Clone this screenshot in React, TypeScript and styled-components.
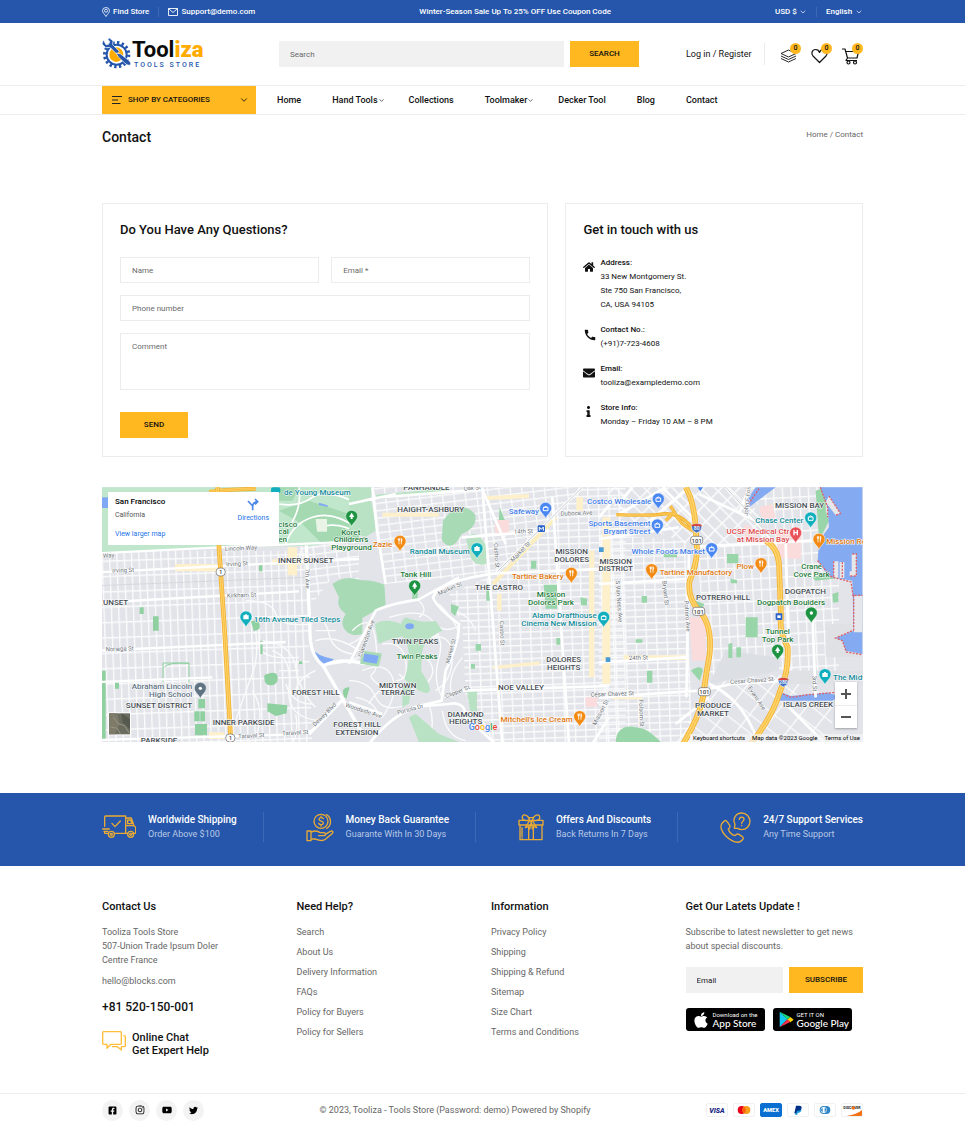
import React from 'react';
import styled, { createGlobalStyle, css } from 'styled-components';
import { FaApple, FaEnvelope, FaFacebookSquare, FaHome, FaInfo, FaInstagram, FaTwitter, FaYoutube } from 'react-icons/fa';
import { MdCall } from 'react-icons/md';
import { ChevronDown } from 'lucide-react';

const blue = '#2556ab';
const amber = '#ffb81f';
const line = '#ececec';
const grey = '#666';

const GlobalStyle = createGlobalStyle`
  *, *::before, *::after { box-sizing: border-box; }
  body { margin: 0; background: #fff; color: #111; font: 400 9px/14px Roboto, "Liberation Sans", sans-serif; }
  a { color: inherit; text-decoration: none; }
  h1, h2, h3, p, ul, dl, dd, address { margin: 0; padding: 0; font-style: normal; }
  ul { list-style: none; }
  button, input, textarea, select { font: inherit; color: inherit; border: 0; border-radius: 0; margin: 0; }
  button { cursor: pointer; }
  svg { display: block; flex: none; }
`;

const Container = styled.div`
  padding: 0 102px;
  @media (max-width: 820px) { padding: 0 20px; }
`;

/* ---------- Top bar ---------- */
const TopBar = styled.div`
  background: ${blue};
  color: #fff;
  font-size: 8px;
  font-weight: 500;
`;
const TopRow = styled(Container)`
  display: flex;
  flex-wrap: wrap;
  align-items: center;
  justify-content: space-between;
  min-height: 23px;
`;
const TopGroup = styled.div`
  display: flex;
  align-items: center;
`;
const TopLink = styled.a`
  display: flex;
  align-items: center;
  gap: 3px;
`;
const TopDivider = styled.span`
  width: 1px;
  height: 10px;
  margin: 0 9px;
  background: #3c68b5;
`;
const SelectWrap = styled.span`
  display: flex;
  align-items: center;
  gap: 2px;
`;
const Select = styled.select`
  appearance: none;
  background: transparent;
  padding: 0;
  option { color: #111; }
`;

/* ---------- Header ---------- */
const HeaderRow = styled(Container)`
  display: flex;
  flex-wrap: wrap;
  align-items: center;
  min-height: 62px;
`;
const LogoLink = styled.a`
  display: flex;
  align-items: center;
  width: 177px;
`;
const LogoText = styled.span`
  display: flex;
  flex-direction: column;
  align-items: flex-start;
`;
const LogoName = styled.span`
  font-size: 22px;
  line-height: 22px;
  font-weight: 700;
  color: #0b0b0b;
  b { color: #ffab00; }
`;
const LogoTag = styled.span`
  padding-left: 2px;
  font-size: 7px;
  line-height: 8px;
  font-weight: 500;
  letter-spacing: 2px;
  color: ${blue};
`;
const SearchForm = styled.form`
  display: flex;
  flex: 1;
  gap: 6px;
`;
const fieldText = css`
  font-size: 8px;
  &::placeholder { color: #6a6a6a; opacity: 1; }
`;
const SearchInput = styled.input`
  flex: 1;
  min-width: 0;
  height: 26px;
  padding: 0 11px;
  background: #f1f1f2;
  ${fieldText}
`;
const Button = styled.button<{ $width: number }>`
  width: ${(p) => p.$width}px;
  height: 26px;
  padding: 0;
  background: ${amber};
  font-size: 8px;
  font-weight: 500;
  color: #111;
`;
const HeaderTools = styled.div`
  display: flex;
  align-items: center;
  justify-content: space-between;
  width: 177px;
  margin-left: 47px;
  @media (max-width: 820px) { margin-left: 16px; }
`;
const Login = styled.a`
  padding: 4px 12px 4px 0;
  border-right: 1px solid ${line};
  white-space: nowrap;
`;
const ToolList = styled.div`
  display: flex;
  gap: 10px;
`;
const Tool = styled.a`
  position: relative;
  width: 21px;
  height: 22px;
  padding-top: 5px;
`;
const Badge = styled.span`
  position: absolute;
  top: 0;
  right: 0;
  width: 11px;
  height: 11px;
  border-radius: 50%;
  background: ${amber};
  text-align: center;
  line-height: 11px;
  font-size: 7px;
  font-weight: 500;
`;

/* ---------- Navigation ---------- */
const NavBar = styled.div`
  border-top: 1px solid ${line};
  border-bottom: 1px solid ${line};
`;
const NavRow = styled(Container)`
  display: flex;
  flex-wrap: wrap;
  align-items: center;
  gap: 21px;
  font-weight: 500;
`;
const CategoryButton = styled.button`
  display: flex;
  align-items: center;
  width: 154px;
  height: 28px;
  gap: 6px;
  padding: 0 7px 0 10px;
  background: ${amber};
  font-size: 8px;
  svg:last-child { margin-left: auto; }
`;
const NavLinks = styled.nav`
  display: flex;
  flex-wrap: wrap;
  gap: 31px;
`;
const NavLink = styled.a<{ $menu?: boolean }>`
  display: flex;
  align-items: center;
  margin-right: ${(p) => (p.$menu ? '-7px' : '0')};
`;

/* ---------- Contact page ---------- */
const TitleRow = styled(Container)`
  display: flex;
  justify-content: space-between;
  align-items: flex-start;
  padding-top: 13px;
  font-size: 8px;
  color: ${grey};
`;
const PageTitle = styled.h1`
  font-size: 14px;
  line-height: 18px;
  font-weight: 500;
  color: #111;
`;
const Cards = styled(Container)`
  display: grid;
  grid-template-columns: 3fr 2fr;
  gap: 17px;
  margin-top: 57px;
  @media (max-width: 640px) { grid-template-columns: 1fr; }
`;
const Card = styled.section`
  border: 1px solid ${line};
  padding: 17px 17px 18px;
`;
const CardTitle = styled.h2`
  font-size: 13px;
  line-height: 18px;
  font-weight: 500;
`;
const ContactForm = styled.form`
  display: grid;
  grid-template-columns: 1fr 1fr;
  gap: 12px;
  margin-top: 18px;
`;
const control = css`
  width: 100%;
  border: 1px solid ${line};
  padding: 0 11px;
  background: #fff;
  ${fieldText}
`;
const Field = styled.input<{ $wide?: boolean }>`
  ${control}
  height: 26px;
  grid-column: ${(p) => (p.$wide ? '1 / -1' : 'auto')};
`;
const Area = styled.textarea`
  ${control}
  display: block;
  grid-column: 1 / -1;
  height: 57px;
  padding-top: 6px;
  resize: none;
`;
const FormAction = styled.div`
  grid-column: 1 / -1;
  margin-top: 10px;
`;
const InfoList = styled.dl`
  display: grid;
  gap: 11px;
  margin-top: 17px;
  font-size: 8px;
`;
const InfoItem = styled.div`
  display: grid;
  grid-template-columns: 12px 1fr;
  column-gap: 5px;
  > svg { margin-top: 5px; }
  dt { font-weight: 500; }
`;

/* ---------- Map ---------- */
const MapSection = styled(Container)`
  margin-top: 30px;
`;
const MapFrame = styled.div`
  position: relative;
  overflow: hidden;
  background: #e6e8ec;
`;
const MapCard = styled.div`
  position: absolute;
  top: 5px;
  left: 6px;
  display: flex;
  justify-content: space-between;
  width: 171px;
  height: 53px;
  padding: 3px 10px 3px 7px;
  background: #fff;
  font-size: 7px;
  line-height: 12px;
  a { color: #1a73e8; }
`;
const MapPlace = styled.div`
  display: flex;
  flex-direction: column;
  strong { font-size: 8px; line-height: 14px; font-weight: 500; color: #000; }
  span { color: #555; }
  a { margin-top: 7px; }
`;
const Directions = styled.a`
  display: flex;
  flex-direction: column;
  align-items: center;
  gap: 1px;
  padding-top: 3px;
`;
const ZoomControl = styled.div`
  position: absolute;
  right: 6px;
  bottom: 14px;
  display: grid;
  width: 22px;
  background: #fff;
  box-shadow: 0 1px 2px rgba(0, 0, 0, 0.3);
`;
const ZoomButton = styled.button`
  display: grid;
  place-items: center;
  height: 23px;
  padding: 0;
  background: transparent;
  & + & { border-top: 1px solid ${line}; }
`;
const MapCredits = styled.div`
  position: absolute;
  right: 0;
  bottom: 0;
  display: flex;
  gap: 7px;
  padding: 0 3px;
  background: rgba(245, 245, 245, 0.7);
  font-size: 6px;
  line-height: 8px;
  color: #000;
`;

/* ---------- Services ---------- */
const Services = styled.section`
  margin-top: 51px;
  background: ${blue};
`;
const ServiceRow = styled(Container)`
  display: flex;
  flex-wrap: wrap;
  align-items: center;
  justify-content: space-between;
  min-height: 73px;
  padding-bottom: 5px;
`;
const Service = styled.div`
  display: flex;
  align-items: center;
  gap: 12px;
  padding-right: 26px;
  border-right: 1px solid #3c68b5;
  &:last-child { padding-right: 0; border-right: 0; }
  h3 { font-size: 10px; line-height: 15px; font-weight: 500; color: #fff; }
  p { line-height: 15px; color: #b9c9e6; }
`;

/* ---------- Footer ---------- */
const FooterGrid = styled(Container)`
  display: grid;
  grid-template-columns: repeat(4, 1fr);
  gap: 17px;
  margin-top: 33px;
  padding-bottom: 36px;
  color: ${grey};
  @media (max-width: 640px) { grid-template-columns: 1fr 1fr; }
`;
const FooterTitle = styled.h2`
  margin-bottom: 10px;
  font-size: 11px;
  line-height: 16px;
  font-weight: 500;
  color: #111;
`;
const FooterLinks = styled.ul`
  line-height: 14px;
  li + li { margin-top: 6px; }
`;
const FooterMail = styled.p`
  margin-top: 7px;
`;
const FooterPhone = styled.p`
  margin-top: 11px;
  font-size: 12px;
  line-height: 16px;
  font-weight: 500;
  color: #111;
`;
const ChatLink = styled.a`
  display: flex;
  gap: 6px;
  margin-top: 16px;
  font-size: 11px;
  line-height: 13px;
  font-weight: 500;
  color: #111;
`;
const NewsForm = styled.form`
  display: flex;
  gap: 6px;
  margin-top: 14px;
`;
const NewsInput = styled(SearchInput)`
  width: 60px;
  &::placeholder { color: #222; }
`;
const Stores = styled.div`
  display: flex;
  gap: 8px;
  margin-top: 15px;
`;
const StoreBadge = styled.a`
  display: flex;
  align-items: center;
  gap: 3px;
  width: 79px;
  height: 23px;
  padding-left: 6px;
  border-radius: 3px;
  background: #000;
  color: #fff;
`;
const StoreText = styled.span`
  display: flex;
  flex-direction: column;
  font-size: 6px;
  line-height: 7px;
  white-space: nowrap;
  b { font-family: Lato, Roboto, sans-serif; font-size: 10px; line-height: 10px; font-weight: 500; }
`;
const Bottom = styled.div`
  border-top: 1px solid ${line};
  color: ${grey};
`;
const BottomRow = styled(Container)`
  display: flex;
  flex-wrap: wrap;
  align-items: center;
  justify-content: space-between;
  min-height: 32px;
`;
const Socials = styled.div`
  display: flex;
  gap: 6px;
`;
const Social = styled.a`
  display: grid;
  place-items: center;
  width: 21px;
  height: 21px;
  border-radius: 50%;
  background: #f3f3f3;
  color: #000;
`;
const Payments = styled.ul`
  display: flex;
  gap: 5px;
`;
const Pay = styled.li<{ $fill?: string }>`
  overflow: hidden;
  border: 1px solid ${(p) => p.$fill || '#f1f1f1'};
  border-radius: 2px;
  background: ${(p) => p.$fill || '#fff'};
`;

/* ---------- Drawings ---------- */
const Logo = () => (
  <svg width="30" height="32" viewBox="0 0 90 96" aria-hidden="true">
    <circle cx="44" cy="50" r="36" fill="none" stroke={blue} strokeWidth="10" strokeDasharray="7 7.14" />
    <circle cx="44" cy="50" r="30" fill="#fff" stroke={blue} strokeWidth="6" />
    <ellipse cx="43" cy="50" rx="21" ry="22" fill="#ffab00" />
    <path d="M4 5L0 18l11 11 13-1 20 20 8-8-20-20 1-12L22 0l-5 3 6 8-3 8-8 1z" fill={blue} stroke="#fff" strokeWidth="2" />
    <path d="M42 45l14 3 20 16c9 7 12 12 9 16s-10 1-17-5L50 58z" fill={blue} stroke="#fff" strokeWidth="2" />
  </svg>
);
const Marker = () => (
  <svg width="8" height="10" viewBox="0 0 16 20" fill="none" stroke="#fff" strokeWidth="1.6" aria-hidden="true">
    <path d="M8 19C5 14 1 11 1 7.500a7 6.500 0 0 1 14 0C15 11 11 14 8 19z" />
    <circle cx="8" cy="7.500" r="3" />
  </svg>
);
const MailOutline = () => (
  <svg width="10" height="8" viewBox="0 0 20 16" fill="none" stroke="#fff" strokeWidth="1.800" aria-hidden="true">
    <path d="M1 1h18v14H1zM1 1l9 8 9-8" />
  </svg>
);
const MenuLines = () => (
  <svg width="10" height="8" viewBox="0 0 20 16" stroke="#222" strokeWidth="2" aria-hidden="true">
    <path d="M0 1h20M0 8h12M0 15h17" />
  </svg>
);
const Layers = () => (
  <svg width="17" height="16" viewBox="0 0 34 32" fill="none" stroke="#111" strokeWidth="1.800" strokeLinejoin="round" aria-hidden="true">
    <path d="M17 4l15 7-15 7-15-7zM2 16l15 7 15-7M2 21l15 7 15-7" />
  </svg>
);
const Heart = () => (
  <svg width="17" height="16" viewBox="0 0 34 32" fill="none" stroke="#111" strokeWidth="2.400" strokeLinejoin="round" aria-hidden="true">
    <path d="M17 29L4 16C0 11 2 3 9 3c4 0 7 2 8 6 1-4 4-6 8-6 7 0 9 8 5 13z" />
  </svg>
);
const Cart = () => (
  <svg width="17" height="17" viewBox="0 0 34 34" fill="none" stroke="#111" strokeWidth="2.400" strokeLinejoin="round" aria-hidden="true">
    <path d="M0 2h6l5 18h19l3-13H8M11 20l-3 5h22" />
    <circle cx="13" cy="29" r="3" />
    <circle cx="26" cy="29" r="3" />
  </svg>
);
const serviceStroke = { fill: 'none', stroke: '#e9ab35', strokeWidth: 4, strokeLinejoin: 'round', strokeLinecap: 'round' } as const;
const Truck = () => (
  <svg width="34" height="24" viewBox="0 0 102 72" {...serviceStroke} aria-hidden="true">
    <path d="M8 34V6q0-3 3-3h60v51M30 25l9 10 16-17M71 9h17l8 23 5 5v18h-9M71 32h25M77 15h9l4 11H77zM2 42h20M6 49h12M18 55H8v-6M38 55h39" />
    <circle cx="28" cy="58" r="9" /><circle cx="28" cy="58" r="3" />
    <circle cx="86" cy="58" r="9" /><circle cx="86" cy="58" r="3" />
  </svg>
);
const MoneyHand = () => (
  <svg width="28" height="29" viewBox="0 0 84 87" {...serviceStroke} aria-hidden="true">
    <circle cx="45" cy="25" r="21" />
    <path d="M61 5c16 8 17 32 1 41M52 17c-3-5-13-4-13 2 0 7 13 4 13 11 0 6-11 7-14 1M45 10v4M45 36v4" />
    <path d="M3 54h12v29H3zM15 58c12-7 20-5 28 1h10c7 0 7 9 0 9H38M58 64l15-9c7-3 10 3 5 7L58 79c-5 4-10 4-16 3l-15-4H15" />
  </svg>
);
const Gift = () => (
  <svg width="26" height="28" viewBox="0 0 78 84" {...serviceStroke} aria-hidden="true">
    <path d="M3 22h72v14H3zM6 36v44h66V36M32 36v44M46 36v44M12 44v26M12 75h1" />
    <path d="M34 18C26 2 12 3 13 14c0 9 12 10 21 8M44 18C52 2 66 3 65 14c0 9-12 10-21 8M33 14h12v10H33zM34 24L22 44l9-3 4 7 5-22M44 24l12 20-9-3-4 7-3-22" />
  </svg>
);
const Support = () => (
  <svg width="31" height="31" viewBox="0 0 93 93" {...serviceStroke} aria-hidden="true">
    <path d="M12 28c5-4 7-3 11 3l6 9c3 5 1 7-4 11 2 9 11 18 20 20 4-5 7-7 12-4l9 6c5 4 5 7 1 11-7 8-18 9-31 2C20 77 9 65 4 51 1 42 5 32 12 28z" />
    <path d="M43 49l2-12c-9-17 3-34 20-34 14 0 25 11 25 25S79 53 65 53c-5 0-9-1-12-4z" />
    <path d="M58 22c1-9 14-8 14 0 0 6-7 5-7 12M65 40v1" />
  </svg>
);
const Chat = () => (
  <svg width="24" height="20" viewBox="0 0 72 60" fill="none" stroke="#ffbd38" strokeWidth="4" strokeLinejoin="round" aria-hidden="true">
    <path d="M5 2h50q3 0 3 3v32q0 3-3 3H27L15 52V40H5q-3 0-3-3V5q0-3 3-3zM64 14h3q3 0 3 3v27q0 3-3 3h-9v10L46 47H30" />
  </svg>
);
const PlayLogo = () => (
  <svg width="15" height="17" viewBox="0 0 45 51" aria-hidden="true">
    <path d="M2 2l23 23L2 49z" fill="#15c7f3" />
    <path d="M2 2l32 16-9 8z" fill="#17d67b" />
    <path d="M34 18l10 8-10 8-9-8z" fill="#ffd500" />
    <path d="M2 49l32-16-9-8z" fill="#f43249" />
  </svg>
);

/* ---------- Map data: three sectors, units of a third of a pixel ---------- */
type Label = [number, number, string, string?, ('start' | 'middle' | 'end')?, number?, number?];
type PinSpot = [number, number, string, string];
const area = '#444b52';
const street = '#6b7178';
const park = '#1d7c3b';
const teal = '#108a99';
const food = '#e0770e';
const shop = '#3f7de8';

const westLabels: Label[] = [
  [555, 32, 'de Young Museum', teal],
  [538, 128, 'cisco', park], [538, 151, 'cal', park], [538, 174, 'en', park],
  [784, 152, 'Koret', park, 'end'], [808, 175, "Children's", park, 'end'], [818, 199, 'Playground', park, 'end'],
  [620, 237, 'INNER SUNSET', area, 'middle'],
  [12, 364, 'UNSET', area], [180, 673, 'SUNSET DISTRICT', area, 'middle'],
  [434, 724, 'INNER PARKSIDE', area, 'middle'], [180, 778, 'PARKSIDE', area, 'middle'],
  [650, 632, 'FOREST HILL', area, 'middle'],
  [774, 729, 'FOREST HILL', area, 'middle'], [774, 752, 'EXTENSION', area, 'middle'],
  [464, 413, '16th Avenue Tiled Steps', teal],
  [280, 616, 'Abraham Lincoln', '#5f7383', 'end'], [280, 639, 'High School', '#5f7383', 'end'],
  [378, 201, 'Lincoln Way', street, 'start', -3, 18], [382, 247, 'Irving St', street, 'start', -3, 18],
  [40, 266, 'Irving St', street, 'start', -2, 18], [384, 341, 'Kirkham St', street, 'start', -2, 18],
  [20, 502, 'Noriega St', street, 'start', -2, 18], [418, 763, 'Taraval St', street, 'start', -3, 18],
  [550, 754, 'Taraval St', street, 'start', -3, 18], [618, 254, '7th Ave', street, 'start', 88, 18],
  [648, 728, 'Dewey Blvd', street, 'start', -45, 18], [738, 668, 'Woodside Ave', street, 'start', 18, 18],
  [12, 221, 'Way', street, 'start', -2, 18],
];
const centralLabels: Label[] = [
  [232, 17, 'PANHANDLE', area, 'middle'], [344, 20, 'Oak St', street, 'start', -5, 18],
  [245, 84, 'HAIGHT-ASHBURY', area, 'middle'], [570, 91, 'Safeway', shop, 'end'],
  [130, 188, 'Zazie', food, 'end'], [362, 209, 'Randall Museum', teal, 'end'],
  [200, 280, 'Tank Hill', park, 'middle'], [668, 210, 'MISSION', area, 'middle'], [668, 233, 'DOLORES', area, 'middle'],
  [450, 319, 'THE CASTRO', area, 'middle'], [644, 284, 'Tartine Bakery', food, 'end'],
  [606, 340, 'Mission', park, 'middle'], [606, 364, 'Dolores Park', park, 'middle'],
  [743, 403, 'Alamo Drafthouse', teal, 'end'], [743, 427, 'Cinema New Mission', teal, 'end'],
  [198, 481, 'TWIN PEAKS', area, 'middle'], [204, 524, 'Twin Peaks', park, 'middle'],
  [146, 611, 'MIDTOWN', area, 'middle'], [146, 634, 'TERRACE', area, 'middle'],
  [644, 535, 'DOLORES', area, 'middle'], [644, 558, 'HEIGHTS', area, 'middle'],
  [516, 617, 'NOE VALLEY', area, 'middle'], [350, 699, 'DIAMOND', area, 'middle'], [350, 721, 'HEIGHTS', area, 'middle'],
  [671, 715, "Mitchell's Ice Cream", food, 'end'],
  [495, 149, '14th St', street, 'start', -2, 18], [635, 95, 'Duboce Ave', street, 'start', -2, 18],
  [492, 235, 'Market St', street, 'start', -46, 18], [434, 178, 'Castro St', street, 'start', 86, 18],
  [452, 411, 'Castro St', street, 'start', 88, 18], [270, 335, 'Market St', street, 'start', -24, 18],
  [300, 540, 'Market St', street, 'start', -74, 18], [38, 520, 'Clarendon Ave', street, 'start', -70, 18],
  [292, 643, 'Clipper St', street, 'start', -22, 18], [146, 692, 'Portola Dr', street, 'start', -15, 18],
  [740, 725, 'Mission St', street, 'start', -62, 18], [725, 638, 'Cesar Chavez St', street, 'start', -2, 18],
];
const eastLabels: Label[] = [
  [157, 60, 'Costco Wholesale', shop, 'end'], [154, 126, 'Sports Basement', shop, 'end'], [154, 150, 'Bryant Street', shop, 'end'],
  [318, 210, 'Whole Foods Market', shop, 'end'], [50, 240, 'MISSION', area, 'middle'], [50, 262, 'DISTRICT', area, 'middle'],
  [182, 273, 'Tartine Manufactory', food], [465, 254, 'Plow', food, 'end'],
  [602, 72, 'MISSION BAY', area, 'middle'], [613, 117, 'Chase Center', teal, 'end'],
  [571, 150, 'UCSF Medical Ctr', '#dc4a4d', 'end'], [571, 174, 'at Mission Bay', '#dc4a4d', 'end'],
  [682, 181, 'Mission Rock', food], [638, 256, 'Crane', park, 'middle'], [638, 279, 'Cove Park', park, 'middle'],
  [619, 329, 'DOGPATCH', area, 'middle'], [576, 362, 'Dogpatch Boulders', park, 'middle'],
  [372, 348, 'POTRERO HILL', area, 'middle'], [536, 449, 'Tunnel', park, 'middle'], [536, 473, 'Top Park', park, 'middle'],
  [342, 673, 'PRODUCE', area, 'middle'], [342, 696, 'MARKET', area, 'middle'],
  [627, 669, 'ISLAIS CREEK', area, 'middle'], [702, 588, 'The Midway', teal],
  [50, 290, 'S Van Ness Ave', street, 'start', 86, 18], [190, 292, 'Bryant St', street, 'start', 84, 18],
  [256, 350, 'Potrero Ave', street, 'start', 86, 18], [90, 528, '24th St', street, 'start', -2, 18],
  [394, 600, 'Cesar Chavez St', street, 'start', -4, 18], [446, 612, 'Evans Ave', street, 'start', 56, 18],
  [120, 648, 'Folsom St', street, 'start', 88, 18], [640, 575, '3rd St', street, 'start', 88, 18],
  [446, 96, 'John F Foran', street, 'start', -84, 18],
];
const westPins: PinSpot[] = [[758, 128, '#1e9443', 'tree'], [441, 430, '#11aebd', 'cam'], [304, 644, '#5f7383', 'dot']];
const centralPins: PinSpot[] = [
  [590, 104, '#4a87f2', 'bag'], [153, 203, '#f28a13', 'fork'], [384, 225, '#11aebd', 'cam'], [197, 337, '#1e9443', 'tree'],
  [667, 299, '#f28a13', 'fork'], [764, 431, '#11aebd', 'bag'], [692, 729, '#f28a13', 'fork'],
];
const eastPins: PinSpot[] = [
  [178, 76, '#4a87f2', 'bag'], [175, 154, '#4a87f2', 'bag'], [338, 225, '#4a87f2', 'bag'], [158, 288, '#f28a13', 'fork'],
  [486, 270, '#f28a13', 'fork'], [635, 133, '#11aebd', 'bag'], [590, 178, '#e8535a', 'H'], [660, 197, '#f28a13', 'fork'],
  [637, 418, '#1e9443', 'dot'], [536, 530, '#1e9443', 'tree'], [678, 603, '#11aebd', 'cam'],
];

const Glyph = ({ kind }: { kind: string }) => {
  if (kind === 'fork') return <path d="M-5 -40v6h4v-6M-3 -40v18M4 -22v-18q4 5 0 10" stroke="#fff" strokeWidth="2.500" fill="none" />;
  if (kind === 'tree') return <path d="M0 -42l8 13H3v6h-6v-6h-5z" fill="#fff" />;
  if (kind === 'bag') return <path d="M-7 -34H7v10H-7zM-4 -34q4 -8 8 0" stroke="#fff" strokeWidth="3" fill="none" />;
  if (kind === 'cam') return <path d="M-8 -36h4l2-3h4l2 3h4v12H-8z" fill="#fff" />;
  if (kind === 'H') return <path d="M-5 -40v16M5 -40v16M-5 -32H5" stroke="#fff" strokeWidth="4" />;
  return <circle cx="0" cy="-31" r="5" fill="#fff" />;
};
const Marks = ({ labels, pins }: { labels: Label[]; pins: PinSpot[] }) => (
  <>
    {pins.map(([x, y, fill, kind]) => (
      <g key={`${x}-${y}`} transform={`translate(${x} ${y})`}>
        <path d="M0 0C-3 -12 -18 -18 -18 -32a18 17 0 0 1 36 0C18 -18 3 -12 0 0z" fill={fill} stroke="#fff" strokeWidth="1.500" />
        <Glyph kind={kind} />
      </g>
    ))}
    {labels.map(([x, y, text, fill, anchor, turn, size]) => (
      <text
        key={`${text}-${x}-${y}`}
        transform={`translate(${x} ${y}) rotate(${turn || 0})`}
        textAnchor={anchor || 'start'}
        fontSize={size || 24}
        fontWeight={size ? 400 : 500}
        fill={fill}
        stroke="#fff"
        strokeWidth="3"
        strokeLinejoin="round"
        paintOrder="stroke"
      >
        {text}
      </text>
    ))}
  </>
);
const Shield = ({ x, y, n, wide, fed }: { x: number; y: number; n: string; wide?: boolean; fed?: boolean }) => (
  <g transform={`translate(${x} ${y})`}>
    {fed ? (
      <path d="M-14 -10Q0 -15 14 -10Q20 6 0 15Q-20 6 -14 -10z" fill="#4272c4" stroke="#fff" strokeWidth="2" />
    ) : (
      <rect x={wide ? -18 : -14} y="-12" width={wide ? 36 : 28} height="24" rx={wide ? 8 : 12} fill="#fff" stroke="#666" strokeWidth="2" />
    )}
    {fed && <path d="M-14 -10Q0 -15 14 -10l2 5H-16z" fill="#d6473f" />}
    <text y="7" textAnchor="middle" fontSize={fed ? 15 : 18} fontWeight="500" fill={fed ? '#fff' : '#444'}>{n}</text>
  </g>
);
const Grid = ({ id, w, h, turn, width = 4 }: { id: string; w: number; h: number; turn: number; width?: number }) => (
  <pattern id={id} width={w} height={h} patternUnits="userSpaceOnUse" patternTransform={`rotate(${turn})`}>
    <path d={`M2 0V${h}M0 2H${w}`} stroke="#fbfbfc" strokeWidth={width} />
  </pattern>
);
const Freeway = ({ d, width = 13 }: { d: string; width?: number }) => (
  <g fill="none" strokeLinejoin="round">
    <path d={d} stroke="#f2b02f" strokeWidth={width} />
    <path d={d} stroke="#ffd46b" strokeWidth={width - 5} />
    <path d={d} stroke="#f2b02f" strokeWidth="2" />
  </g>
);

const CityMap = () => (
  <svg width="100%" height="255" viewBox="0 0 2283 765" preserveAspectRatio="xMidYMid slice" role="img" aria-label="Map of San Francisco">
    <defs>
      <Grid id="sunset" w={22} h={46} turn={-2} />
      <Grid id="haight" w={34} h={22} turn={-7} />
      <Grid id="mission" w={31} h={20} turn={-2} />
      <Grid id="potrero" w={26} h={34} turn={-3} />
      <Grid id="soma" w={38} h={30} turn={45} width={5} />
      <Grid id="harbor" w={60} h={44} turn={38} />
    </defs>
    <rect width="2283" height="765" fill="#e2e4e9" />

    <g transform="translate(-9 -9)">
      <path d="M0 200H620L640 780H0z" fill="url(#sunset)" />
      <path d="M600 180H780V290L700 280L640 360z" fill="url(#haight)" />
      <g fill="none" stroke="#fbfbfc" strokeWidth="4">
        <path d="M430 400q60 10 50 70t120 50M440 350q80 0 90 40t110 30M470 440q10 80 -10 130t-50 140M490 470q90 10 100 80t60 120M520 500q60 20 50 110t90 100M640 400q40 0 50 50t70 60M650 560q-50 20 -60 60M560 600q20 60 80 60M540 560h60M690 540q40 0 90 -20M740 640q-30 40 -90 70M460 620q40 60 10 140M590 690q10 50 -10 90M650 440h60M650 470q60 -20 130 30" />
      </g>
      <path d="M0 10H780V160L640 185L360 190L0 208z" fill="#c0e6cb" />
      <path d="M540 80l90 -30 150 50v70l-110 10 -60 -60zM540 10h60l-20 40h-40z" fill="#a4d9b2" />
      <path d="M8 40h20v32H8z" fill="#80a9f5" />
      <path d="M660 56l26 8v5l-26 -6z" fill="#80a9f5" />
      <path d="M540 60q60 10 100 -20t140 20M560 180q20 -60 80 -80t130 30M600 10q10 60 -30 120M660 130q60 -20 120 20" fill="none" stroke="#fff" strokeWidth="5" />
      <path d="M650 105h34v38h-30z" fill="#e9f3e6" />
      <path d="M700 300q40 -30 90 -10v160q-30 10 -50 -10t0 -50q-30 -20 -20 -50z" fill="#a8dab5" />
      <g fill="#8ed0a0">
        <path d="M122 370h12v20h-12zM162 397h17v43h-17zM480 240h10v22h-10zM298 645h20v28h-20zM286 682h16v30h-16zM304 682h14v30h-14zM288 720h36v34h-36zM48 596h12v18H48zM600 532h10v8h-10z" />
        <path d="M456 412q22 -8 26 10t-18 18zM498 572q36 -14 38 8t-20 24 -20 -30zM505 658l60 6 -2 24 -32 8 -26 -14zM484 470h7v40h-7zM8 560h12v210H8zM736 640q-14 -30 16 -30l-10 34z" />
        <path d="M192 595v-58h78v58M196 550q10 -16 74 -12" fill="none" stroke="#8ed0a0" strokeWidth="3" />
      </g>
      <path d="M633 488q20 28 72 38 -10 10 -30 14 -30 -20 -42 -52z" fill="#80a9f5" />
      <path d="M228 240h126v22H228zM520 226h90v16h-90zM566 190h28v84h-28zM330 745h46v20h-46z" fill="#fdf0cb" />
      <path d="M0 208L360 190L780 172M0 265L780 225M0 356L600 322M0 500L560 474M0 594L340 580M0 768L560 752L640 740" fill="none" stroke="#fff" strokeWidth="7" />
      <path d="M0 305L620 280" stroke="#cfd2d6" strokeWidth="2" />
      <path d="M622 184L634 470Q640 520 672 545L728 640L790 748M672 545Q730 520 800 540M728 650L630 750" fill="none" stroke="#fff" strokeWidth="10" />
      <Freeway d="M330 24L380 18L470 14" width={12} />
      <Freeway d="M356 10L360 190L378 460L396 780" width={14} />
      <Shield x={365} y={264} n="1" /><Shield x={394} y={762} n="1" />
      <rect x="516" y="10" width="28" height="18" rx="6" fill="#11aebd" />
    </g>

    <g transform="translate(741 -9)">
      <path d="M70 10H700L440 270L110 300z" fill="url(#haight)" />
      <path d="M440 270L700 10H830V780H430L350 640L340 430L300 330z" fill="url(#mission)" />
      <g fill="none" stroke="#fbfbfc" strokeWidth="4">
        <path d="M10 440q60 -60 70 30t-10 100 60 60M40 560q70 -30 90 20t-30 120M100 480q60 -10 70 50t-30 60M150 570q60 60 90 20t-20 -80M230 420q60 30 40 100t10 120M120 400q100 -30 130 10t70 20M0 590q60 0 80 50t100 20M20 640q60 10 70 60M250 460q60 -10 60 60t-50 100M270 360q60 60 60 100M210 350q30 30 0 50M330 690q60 -30 100 80M280 680q10 80 70 90M240 660q20 60 0 110M0 480q40 -10 60 -60M60 660q30 -60 80 -40M340 520q-50 60 -30 120M310 380q50 10 70 60M180 440q40 40 90 10" />
      </g>
      <g fill="#b8e2c3">
        <path d="M0 10H70L66 40L0 60zM80 32L300 12 300 24 84 46zM0 60l66 -12 18 90 -34 20 -50 -10z" />
        <path d="M0 292q60 -10 106 10l4 60 -70 40 -40 10z" fill="#a8dab5" />
        <path d="M282 110q50 -70 96 -20 10 40 -40 60 -30 60 -60 18z" fill="#a8dab5" />
        <path d="M350 160q40 -30 62 30v50q-40 10 -50 -30z" />
        <path d="M78 420q30 -20 80 0 30 30 -10 40t-60 20z" />
        <path d="M170 400q50 20 90 10l20 30q-50 20 -60 60l-4 60q40 60 20 66t-70 -40q20 -60 10 -100 -40 -60 -6 -86z" />
        <path d="M160 600l30 -10 -10 70 -20 10zM200 690l70 60 60 24H210L180 700zM354 622h30v60h-20z" />
        <path d="M584 302h40v72h-34zM452 70l20 50 -24 10zM412 300h14v50h-14zM380 480h16v20h-16zM366 540h12v14h-12zM306 360l24 8 -12 28 -12 -12zM694 340l20 4v20h-18zM622 462h12v20h-12zM546 230h16v24h-16zM190 320h16v26h-16z" fill="#98d5a8" />
      </g>
      <path d="M42 504l52 8 -8 32 -48 -8z" fill="#80a9f5" stroke="#a8dab5" strokeWidth="8" />
      <ellipse cx="182" cy="427" rx="13" ry="9" fill="#80a9f5" />
      <path d="M438 108h42v40h-42zM710 640h34v28h-34z" fill="#fbdcdc" />
      <path d="M100 86h170v12H100zM410 36l130 -6v12l-130 6zM432 546l140 -14v10l-140 14zM720 200h16v380h-16zM444 330h14v50h-14zM682 40h20v40h-20z" fill="#fdf0cb" />
      <path d="M432 300L620 100" stroke="#fdeebf" strokeWidth="12" />
      <path d="M700 10L440 268Q270 290 252 340Q262 370 330 420Q330 480 290 560L278 650L200 668Q120 700 60 780M0 540Q60 420 80 380Q120 360 210 346L330 280M70 10L84 140L110 300M90 40L400 16L470 180M400 10L460 780M440 268L780 254M340 160L600 140M610 40L660 780M0 60L140 30M0 655L100 690M200 668L300 660Q350 650 350 700L440 780M780 700L730 780M330 620L780 606" fill="none" stroke="#fff" strokeWidth="8" />
      <path d="M700 10L446 262" stroke="#aab0b5" strokeWidth="2" />
      <rect x="566" y="124" width="22" height="20" rx="3" fill="#2a63ca" /><path d="M571 140v-11l6 7 6 -7v11" fill="none" stroke="#fff" strokeWidth="3" />
    </g>

    <g transform="translate(1491 -9)">
      <path d="M0 150L260 170L280 780H0z" fill="url(#mission)" />
      <path d="M20 10H430L530 180L290 190L60 100z" fill="url(#soma)" />
      <path d="M290 180H530L560 560L330 580z" fill="url(#potrero)" />
      <path d="M450 10H670L660 200L720 280V560H560L530 180z" fill="url(#potrero)" />
      <path d="M330 590L540 570L700 640V780H230z" fill="url(#harbor)" />
      <path d="M380 500L540 520V560L330 600z" fill="#dcdfe4" />
      <path d="M560 560H790V600H560zM680 420h110v100H680z" fill="#dfe1e5" />
      <g fill="#fbdcdc">
        <path d="M530 140h76v84h-66zM480 70l40 -10 10 40 -40 10zM270 400h50v130h-40zM436 120l40 20v40l-40 -10z" />
      </g>
      <g fill="#98d5a8">
        <path d="M440 400h36v60h-36zM384 210h34v28h-34zM128 336h16v20h-16zM144 560h16v36h-16zM50 780q0 -30 14 -42t36 -10 36 8 30 20 26 24zM276 560q30 -20 36 0l-10 30zM290 350l26 10 -10 24zM388 480l12 -4v46h-12zM110 466h20v10h-20zM194 206h40v14h-40zM412 490h14v30h-14zM394 284l20 4v10h-18zM650 20l30 -10v70l10 30 -30 60 -4 -60zM640 280l80 -20 20 20 -90 10zM700 330l18 -6v30l-16 2z" />
      </g>
      <path d="M10 100h24v500H10zM74 514h190v14H74zM40 640h90v6H40z" fill="#fdf0cb" />
      <path d="M664 10H790V510L740 500 730 470 710 462 764 440 760 290 690 278 656 230 660 170 690 130 686 70z" fill="#84abf2" />
      <path d="M470 10h60l-80 60 -4 -24zM536 622l40 14 110 -10 34 10 -20 14H540z" fill="#84abf2" />
      <path d="M690 36l34 52 -14 6 -30 -40zM758 210h14v66h-20v-14h6zM704 232h14v50h-14zM722 234h14v48h-14zM765 335h25v110h-25z" fill="#e5e7eb" />
      <path d="M664 10l22 60 0 30M690 36l34 52 -14 6M656 230l40 48 60 16 6 40h28M764 334v104l-54 24 20 8 12 34 48 8M534 622l42 18 50 -8 100 -8 50 10M760 210h12v66h-20M704 232v48M730 234v48M480 14l-34 50" fill="none" stroke="#dd5f68" strokeWidth="4" strokeDasharray="6 4" />
      <path d="M50 40L0 100M380 10L530 180M100 10L60 60M190 10L280 100M60 90L200 10M140 120L260 20M0 165L240 130M300 30L470 110M290 188L640 170M640 390L650 640M0 640L300 620L400 600L560 590M560 180L570 560M0 535L260 520M270 200L262 640M330 600Q430 640 480 780M560 660L680 780M230 720L330 640M0 300L260 285M450 10L420 90" fill="none" stroke="#fff" strokeWidth="8" />
      <path d="M380 10L520 165" stroke="#aab0b5" strokeWidth="2" />
      <Freeway d="M52 92Q160 96 190 90Q240 84 278 130M200 110L226 84Q240 120 282 140M226 84L214 66" width={10} />
      <Freeway d="M260 10Q290 60 292 170Q300 230 272 290Q264 340 300 380Q340 420 332 510Q318 590 312 640Q300 700 252 780" width={17} />
      <Freeway d="M500 170Q536 190 540 240L546 400Q540 440 566 490Q570 560 544 620Q520 700 455 780" width={17} />
      <Shield x={293} y={132} n="80" fed /><Shield x={293} y={169} n="101" wide /><Shield x={299} y={382} n="101" wide />
      <Shield x={316} y={623} n="101" wide /><Shield x={553} y={594} n="280" fed />
      <rect x="530" y="388" width="20" height="20" rx="3" fill="#2a63ca" /><path d="M535 394h10v8h-10z" fill="#fff" />
      <path d="M296 10h16l-8 12z" fill="#4a87f2" />
      <path d="M0 190h14v14H0zM20 520h14v14H20z" fill="#4a9bd4" />
    </g>

    <g transform="translate(741 -9)"><Marks labels={centralLabels} pins={centralPins} /></g>
    <g transform="translate(-9 -9)"><Marks labels={westLabels} pins={westPins} /></g>
    <g transform="translate(1491 -9)"><Marks labels={eastLabels} pins={eastPins} /></g>

    <text x="1100" y="730" fontSize="27" fontWeight="500" stroke="#fff" strokeWidth="2" paintOrder="stroke">
      <tspan fill="#4285f4">G</tspan><tspan fill="#ea4335">o</tspan><tspan fill="#fbbc05">o</tspan><tspan fill="#4285f4">g</tspan><tspan fill="#34a853">l</tspan><tspan fill="#ea4335">e</tspan>
    </text>
    <g transform="translate(18 676)">
      <rect width="69" height="69" fill="#fff" />
      <rect x="3" y="3" width="63" height="63" fill="#6b6c60" />
      <path d="M3 3h24l8 30 -14 33H3z" fill="#7d7a6a" />
      <path d="M40 3l26 18v30L44 30z" fill="#55594e" />
      <path d="M16 14l14 20 20 6 14 22M8 44l20 4 10 18" stroke="#9a9582" strokeWidth="3" fill="none" />
    </g>
  </svg>
);

const VisaCard = () => (
  <svg width="20" height="12" viewBox="0 0 60 36" role="img" aria-label="Visa">
    <text x="30" y="26" textAnchor="middle" fontSize="21" fontWeight="900" fontStyle="italic" fill="#1b2a86">VISA</text>
  </svg>
);
const MasterCard = () => (
  <svg width="20" height="12" viewBox="0 0 60 36" role="img" aria-label="Mastercard">
    <circle cx="23" cy="18" r="12" fill="#eb001b" /><circle cx="37" cy="18" r="12" fill="#f79e1b" />
    <path d="M30 8a12 12 0 0 1 0 20 12 12 0 0 1 0-20z" fill="#ff5f00" />
  </svg>
);
const Amex = () => (
  <svg width="20" height="12" viewBox="0 0 60 36" role="img" aria-label="American Express">
    <text x="30" y="24" textAnchor="middle" fontSize="17" fontWeight="900" fill="#fff">AMEX</text>
  </svg>
);
const PayPal = () => (
  <svg width="20" height="12" viewBox="0 0 60 36" role="img" aria-label="PayPal">
    <path d="M26 14h12c5 4 0 12-7 12h-2l-1 6h-7z" fill="#179bd7" />
    <path d="M24 5h10c7 0 8 5 6 10-2 4-5 5-9 5h-4l-2 8h-6z" fill="#003087" />
  </svg>
);
const Diners = () => (
  <svg width="20" height="12" viewBox="0 0 60 36" role="img" aria-label="Diners Club">
    <path d="M30 6h4a12 12 0 0 1 0 24h-4z" fill="#2d86c9" />
    <circle cx="26" cy="18" r="12" fill="#2d86c9" />
    <circle cx="26" cy="18" r="9" fill="#fff" />
    <path d="M23 11v14q-5-3-5-7t5-7zM29 11v14q5-3 5-7t-5-7z" fill="#2d86c9" />
  </svg>
);
const Discover = () => (
  <svg width="20" height="12" viewBox="0 0 60 36" role="img" aria-label="Discover">
    <path d="M60 18v18H14q30-4 46-18z" fill="#f47216" />
    <text x="30" y="16" textAnchor="middle" fontSize="11" fontWeight="700" fill="#222">DISCOVER</text>
    <circle cx="34" cy="12" r="5" fill="#f47216" />
  </svg>
);

const navItems = [
  { text: 'Home' }, { text: 'Hand Tools', menu: true }, { text: 'Collections' }, { text: 'Toolmaker', menu: true },
  { text: 'Decker Tool' }, { text: 'Blog' }, { text: 'Contact' },
];
const services = [
  { icon: <Truck />, title: 'Worldwide Shipping', text: 'Order Above $100' },
  { icon: <MoneyHand />, title: 'Money Back Guarantee', text: 'Guarante With In 30 Days' },
  { icon: <Gift />, title: 'Offers And Discounts', text: 'Back Returns In 7 Days' },
  { icon: <Support />, title: '24/7 Support Services', text: 'Any Time Support' },
];
const linkColumns = [
  { title: 'Need Help?', links: ['Search', 'About Us', 'Delivery Information', 'FAQs', 'Policy for Buyers', 'Policy for Sellers'] },
  { title: 'Information', links: ['Privacy Policy', 'Shipping', 'Shipping & Refund', 'Sitemap', 'Size Chart', 'Terms and Conditions'] },
];

export default function App() {
  return (
    <>
      <GlobalStyle />
      <header>
        <TopBar>
          <TopRow>
            <TopGroup>
              <TopLink href="#store"><Marker />Find Store</TopLink>
              <TopDivider />
              <TopLink href="mailto:Support@demo.com"><MailOutline />Support@demo.com</TopLink>
            </TopGroup>
            <p>Winter-Season Sale Up To 25% OFF Use Coupon Code</p>
            <TopGroup>
              <SelectWrap>
                <Select aria-label="Currency"><option>USD $</option></Select>
                <ChevronDown size={8} />
              </SelectWrap>
              <TopDivider />
              <SelectWrap>
                <Select aria-label="Language"><option>English</option></Select>
                <ChevronDown size={8} />
              </SelectWrap>
            </TopGroup>
          </TopRow>
        </TopBar>
        <HeaderRow>
          <LogoLink href="#home">
            <Logo />
            <LogoText>
              <LogoName>Tool<b>iza</b></LogoName>
              <LogoTag>TOOLS STORE</LogoTag>
            </LogoText>
          </LogoLink>
          <SearchForm onSubmit={(e) => e.preventDefault()}>
            <SearchInput aria-label="Search" placeholder="Search" />
            <Button $width={69}>SEARCH</Button>
          </SearchForm>
          <HeaderTools>
            <Login href="#login">Log in / Register</Login>
            <ToolList>
              <Tool href="#compare" aria-label="Compare"><Layers /><Badge>0</Badge></Tool>
              <Tool href="#wishlist" aria-label="Wishlist"><Heart /><Badge>0</Badge></Tool>
              <Tool href="#cart" aria-label="Cart"><Cart /><Badge>0</Badge></Tool>
            </ToolList>
          </HeaderTools>
        </HeaderRow>
        <NavBar>
          <NavRow>
            <CategoryButton><MenuLines />SHOP BY CATEGORIES<ChevronDown size={10} /></CategoryButton>
            <NavLinks>
              {navItems.map((n) => (
                <NavLink key={n.text} href="#" $menu={n.menu}>{n.text}{n.menu && <ChevronDown size={7} />}</NavLink>
              ))}
            </NavLinks>
          </NavRow>
        </NavBar>
      </header>

      <main>
        <TitleRow>
          <PageTitle>Contact</PageTitle>
          <p><a href="#home">Home</a> / Contact</p>
        </TitleRow>
        <Cards>
          <Card>
            <CardTitle>Do You Have Any Questions?</CardTitle>
            <ContactForm onSubmit={(e) => e.preventDefault()}>
              <Field aria-label="Name" placeholder="Name" />
              <Field aria-label="Email" type="email" placeholder="Email *" />
              <Field aria-label="Phone number" type="tel" placeholder="Phone number" $wide />
              <Area aria-label="Comment" placeholder="Comment" />
              <FormAction><Button $width={68}>SEND</Button></FormAction>
            </ContactForm>
          </Card>
          <Card>
            <CardTitle>Get in touch with us</CardTitle>
            <InfoList>
              <InfoItem><FaHome size={12} /><div><dt>Address:</dt><dd>33 New Montgomery St.<br />Ste 750 San Francisco,<br />CA, USA 94105</dd></div></InfoItem>
              <InfoItem><MdCall size={14} /><div><dt>Contact No.:</dt><dd>(+91)7-723-4608</dd></div></InfoItem>
              <InfoItem><FaEnvelope size={12} /><div><dt>Email:</dt><dd>tooliza@exampledemo.com</dd></div></InfoItem>
              <InfoItem><FaInfo size={11} /><div><dt>Store Info:</dt><dd>Monday – Friday 10 AM – 8 PM</dd></div></InfoItem>
            </InfoList>
          </Card>
        </Cards>
        <MapSection>
          <MapFrame>
            <CityMap />
            <MapCard>
              <MapPlace>
                <strong>San Francisco</strong>
                <span>California</span>
                <a href="#map">View larger map</a>
              </MapPlace>
              <Directions href="#directions">
                <svg width="12" height="13" viewBox="0 0 36 39" fill="none" stroke="#4a87e8" strokeWidth="5" aria-hidden="true">
                  <path d="M17 37V24L3 9M17 24Q18 13 30 11M24 3l8 8-8 8" />
                </svg>
                Directions
              </Directions>
            </MapCard>
            <ZoomControl>
              <ZoomButton aria-label="Zoom in"><svg width="10" height="10" viewBox="0 0 10 10" stroke="#555" strokeWidth="2"><path d="M5 0v10M0 5h10" /></svg></ZoomButton>
              <ZoomButton aria-label="Zoom out"><svg width="10" height="10" viewBox="0 0 10 10" stroke="#555" strokeWidth="2"><path d="M0 5h10" /></svg></ZoomButton>
            </ZoomControl>
            <MapCredits><span>Keyboard shortcuts</span><span>Map data ©2023 Google</span><a href="#terms">Terms of Use</a></MapCredits>
          </MapFrame>
        </MapSection>
        <Services>
          <ServiceRow>
            {services.map((s) => (
              <Service key={s.title}>{s.icon}<div><h3>{s.title}</h3><p>{s.text}</p></div></Service>
            ))}
          </ServiceRow>
        </Services>
      </main>

      <footer>
        <FooterGrid>
          <div>
            <FooterTitle>Contact Us</FooterTitle>
            <address>Tooliza Tools Store<br />507-Union Trade Ipsum Doler<br />Centre France</address>
            <FooterMail><a href="mailto:hello@blocks.com">hello@blocks.com</a></FooterMail>
            <FooterPhone>+81 520-150-001</FooterPhone>
            <ChatLink href="#chat"><Chat /><span>Online Chat<br />Get Expert Help</span></ChatLink>
          </div>
          {linkColumns.map((c) => (
            <div key={c.title}>
              <FooterTitle>{c.title}</FooterTitle>
              <FooterLinks>{c.links.map((l) => <li key={l}><a href="#">{l}</a></li>)}</FooterLinks>
            </div>
          ))}
          <div>
            <FooterTitle>Get Our Latets Update !</FooterTitle>
            <p>Subscribe to latest newsletter to get news about special discounts.</p>
            <NewsForm onSubmit={(e) => e.preventDefault()}>
              <NewsInput aria-label="Email" type="email" placeholder="Email" />
              <Button $width={74}>SUBSCRIBE</Button>
            </NewsForm>
            <Stores>
              <StoreBadge href="#ios"><FaApple size={18} /><StoreText>Download on the<b>App Store</b></StoreText></StoreBadge>
              <StoreBadge href="#android"><PlayLogo /><StoreText>GET IT ON<b>Google Play</b></StoreText></StoreBadge>
            </Stores>
          </div>
        </FooterGrid>
        <Bottom>
          <BottomRow>
            <Socials>
              <Social href="#" aria-label="Facebook"><FaFacebookSquare size={9} /></Social>
              <Social href="#" aria-label="Instagram"><FaInstagram size={10} /></Social>
              <Social href="#" aria-label="YouTube"><FaYoutube size={10} /></Social>
              <Social href="#" aria-label="Twitter"><FaTwitter size={9} /></Social>
            </Socials>
            <p>© 2023, Tooliza - Tools Store (Password: demo) Powered by Shopify</p>
            <Payments>
              <Pay><VisaCard /></Pay>
              <Pay><MasterCard /></Pay>
              <Pay $fill="#0a6fd0"><Amex /></Pay>
              <Pay><PayPal /></Pay>
              <Pay><Diners /></Pay>
              <Pay><Discover /></Pay>
            </Payments>
          </BottomRow>
        </Bottom>
      </footer>
    </>
  );
}
